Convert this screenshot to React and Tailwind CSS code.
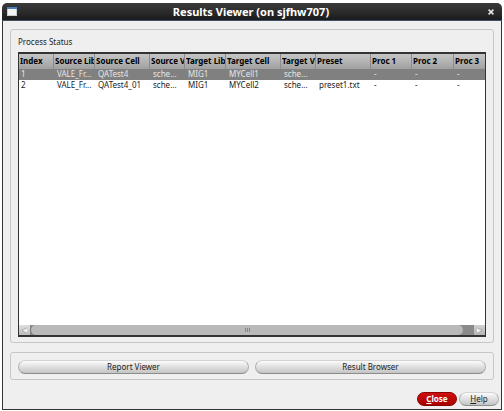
import React from "react";

const columns = [
  { label: "Index", width: "w-[34px]" },
  { label: "Source Lib", width: "w-[41px]" },
  { label: "Source Cell", width: "w-[55px]" },
  { label: "Source View", width: "w-[35px]" },
  { label: "Target Lib", width: "w-[41px]" },
  { label: "Target Cell", width: "w-[55px]" },
  { label: "Target View", width: "w-[35px]" },
  { label: "Preset", width: "w-[55px]" },
  { label: "Proc 1", width: "w-[41px]" },
  { label: "Proc 2", width: "w-[42px]" },
  { label: "Proc 3", width: "w-auto" },
];

const rows = [
  ["1", "VALE_Fr...", "QATest4", "sche...", "MIG1", "MYCell1", "sche...", "", "-", "-", "-"],
  ["2", "VALE_Fr...", "QATest4_01", "sche...", "MIG1", "MYCell2", "sche...", "preset1.txt", "-", "-", "-"],
];

function TitleBar() {
  return (
    <header className="flex h-[18px] shrink-0 items-center rounded-t-[5px] border-b border-[#3d5266] bg-linear-to-b from-[#3b3b3b] via-[#2c2c2c] to-[#1b1b1b] px-[5px]">
      <svg className="h-[9px] w-[10px]" viewBox="0 0 10 9" aria-hidden="true">
        <rect x="0" y="0" width="10" height="9" fill="#c9ccd0" />
        <rect x="1" y="2" width="8" height="6" fill="#f4f4f4" />
        <rect x="0" y="0" width="10" height="2" fill="#4d7fc0" />
      </svg>
      <h1 className="flex-1 text-center text-[11px] leading-[16px] font-bold whitespace-nowrap text-white">
        Results Viewer (on sjfhw707)
      </h1>
      <button type="button" aria-label="Close window" className="flex h-3 w-[12px] items-center justify-center">
        <svg className="h-[6px] w-[6px]" viewBox="0 0 6 6" aria-hidden="true">
          <path d="M0.6 0.6 L5.4 5.4 M5.4 0.6 L0.6 5.4" stroke="#e8e8e8" strokeWidth="1.5" />
        </svg>
      </button>
    </header>
  );
}

function StatusTable() {
  return (
    <table className="w-full table-fixed border-separate border-spacing-0 text-left">
      <thead>
        <tr className="bg-linear-to-b from-[#c6c6c6] to-[#a0a0a0]">
          {columns.map((c, i) => (
            <th
              key={c.label}
              scope="col"
              className={`${c.width} ${i > 0 ? "border-l border-l-[#8c8c8c]" : ""} h-[15px] overflow-hidden p-0 pl-px align-top text-[8px] leading-[14px] font-bold whitespace-nowrap text-black`}
            >
              <div className="overflow-hidden">{c.label}</div>
            </th>
          ))}
        </tr>
      </thead>
      <tbody>
        {rows.map((r, i) => (
          <tr key={r[0]} className={i === 0 ? "bg-[#808080] text-[#e6e6e6]" : "text-[#222]"}>
            {r.map((v, j) => (
              <td
                key={j}
                className={`${j === 0 ? "pl-[2px]" : "pl-[4px]"} h-[11px] overflow-hidden p-0 align-top text-[8px] leading-[10px] whitespace-nowrap`}
              >
                {v}
              </td>
            ))}
          </tr>
        ))}
      </tbody>
    </table>
  );
}

function ScrollBar() {
  return (
    <div className="flex h-[10px] shrink-0 bg-[#8a8a8a]">
      <button type="button" aria-label="Scroll left" className="flex w-[11px] items-center justify-center bg-linear-to-b from-[#dedede] to-[#bdbdbd]">
        <svg className="h-[7px] w-[7px]" viewBox="0 0 7 7" aria-hidden="true">
          <path d="M6 0.8 L1 3.5 L6 6.2" fill="#f2f2f2" stroke="#8f8f8f" strokeWidth="0.6" />
        </svg>
      </button>
      <div className="flex-1 pr-[11px]">
        <div className="flex h-full items-center justify-center gap-px rounded-full border-l border-[#777] bg-[#b9b9b9]">
          <span className="h-1 w-px bg-[#858585]" />
          <span className="h-1 w-px bg-[#858585]" />
          <span className="h-1 w-px bg-[#858585]" />
        </div>
      </div>
      <button type="button" aria-label="Scroll right" className="flex w-[11px] items-center justify-center bg-linear-to-b from-[#d2d2d2] to-[#b4b4b4]">
        <svg className="h-[7px] w-[7px]" viewBox="0 0 7 7" aria-hidden="true">
          <path d="M1 0.8 L6 3.5 L1 6.2" fill="#f2f2f2" stroke="#8f8f8f" strokeWidth="0.6" />
        </svg>
      </button>
    </div>
  );
}

const greyButton =
  "h-[14px] rounded-full border border-t-[#d4d4d4] border-x-[#b0b0b0] border-b-[#8c8c8c] bg-linear-to-b from-[#fbfbfb] to-[#c4c4c4] text-[8px] leading-[12px] text-[#222]";

export default function App() {
  return (
    <div className="flex min-h-screen flex-col bg-white pt-[3px] pr-[2px] pb-px pl-[2px] font-['Noto_Sans','Open_Sans',sans-serif] text-[#222]">
      <TitleBar />
      <main className="flex flex-1 flex-col border border-t-0 border-[#333] bg-[#efefef] px-[7px] pt-2 pb-[3px]">
        <section className="flex flex-1 flex-col rounded-[3px] border border-[#c6c6c6] px-[7px] pt-[6px] pb-[5px]">
          <h2 className="mb-[4px] text-[8px] leading-[12px]">Process Status</h2>
          <div className="flex flex-1 flex-col border border-t-2 border-b-2 border-[#333]">
            <div className="flex-1 bg-white">
              <StatusTable />
            </div>
            <ScrollBar />
          </div>
        </section>

        <section className="mt-[9px] flex gap-[6px] rounded-[3px] border border-[#c6c6c6] px-[7px] pt-[7px] pb-[5px]">
          <button type="button" className={`${greyButton} flex-1`}>Report Viewer</button>
          <button type="button" className={`${greyButton} flex-1`}>Result Browser</button>
        </section>

        <footer className="mt-[12px] -mr-[5px] flex justify-end gap-[2px]">
          <button
            type="button"
            className="h-[14px] w-10 rounded-full border border-[#8d0000] bg-linear-to-b from-[#d01010] to-[#a80000] text-[8px] leading-[12px] font-bold text-white"
          >
            <span className="underline">C</span>lose
          </button>
          <button type="button" className={`${greyButton} w-10`}>
            <span className="underline">H</span>elp
          </button>
        </footer>
      </main>
    </div>
  );
}
